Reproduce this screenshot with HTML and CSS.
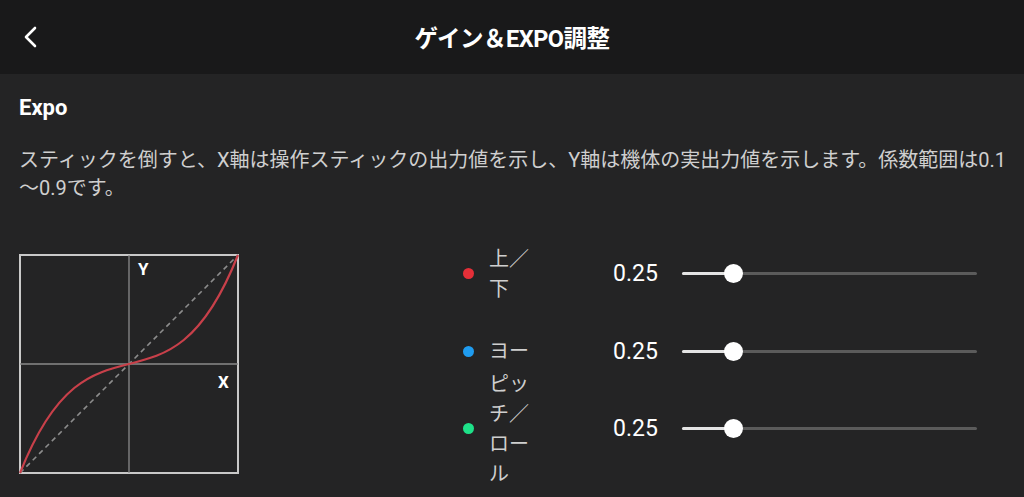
FILE: index.html
```html
<!DOCTYPE html>
<html lang="ja">
<head>
<meta charset="utf-8">
<title>ゲイン＆EXPO調整</title>
<link rel="stylesheet" href="styles.css">
</head>
<body>
<header class="topbar">
  <button class="back" aria-label="戻る">
    <svg width="16" height="22" viewBox="0 0 16 22"><polyline points="12,2 3,11 12,20" fill="none" stroke="#ffffff" stroke-width="2.6" stroke-linecap="round" stroke-linejoin="round"/></svg>
  </button>
  <h1 class="title">ゲイン＆EXPO調整</h1>
</header>
<main class="content">
  <h2 class="section-title">Expo</h2>
  <p class="desc">スティックを倒すと、X軸は操作スティックの出力値を示し、Y軸は機体の実出力値を示します。係数範囲は0.1<br>〜0.9です。</p>
  <section class="expo">
    <div class="graph">
      <svg width="220" height="220" viewBox="0 0 220 220">
        <rect x="1" y="1" width="218" height="218" fill="none" stroke="#c9c9c9" stroke-width="2"/>
        <line x1="110" y1="1" x2="110" y2="219" stroke="#8a8a8a" stroke-width="1.3"/>
        <line x1="1" y1="110" x2="219" y2="110" stroke="#8a8a8a" stroke-width="1.3"/>
        <line x1="1" y1="219" x2="219" y2="1" stroke="#8c8c8c" stroke-width="1.6" stroke-dasharray="5 4"/>
        <path d="M1 219 C37 128.3 73.5 119.2 110 110 C146.5 100.8 183 91.7 219 1" fill="none" stroke="#c8404a" stroke-width="2.2"/>
        <text x="119" y="21" class="axis-label">Y</text>
        <text x="199" y="134" class="axis-label">X</text>
      </svg>
    </div>
    <div class="controls">
      <div class="row">
        <span class="dot red"></span>
        <span class="label">上／下</span>
        <span class="value">0.25</span>
        <div class="slider"><div class="fill" style="width:17.5%"></div><div class="thumb" style="left:17.5%"></div></div>
      </div>
      <div class="row">
        <span class="dot blue"></span>
        <span class="label">ヨー</span>
        <span class="value">0.25</span>
        <div class="slider"><div class="fill" style="width:17.5%"></div><div class="thumb" style="left:17.5%"></div></div>
      </div>
      <div class="row">
        <span class="dot green"></span>
        <span class="label">ピッチ／ロール</span>
        <span class="value">0.25</span>
        <div class="slider"><div class="fill" style="width:17.5%"></div><div class="thumb" style="left:17.5%"></div></div>
      </div>
    </div>
  </section>
</main>
</body>
</html>
```
FILE: styles.css
```css
* { box-sizing: border-box; }
html, body {
  margin: 0;
  padding: 0;
  height: 497px;
  overflow: hidden;
  background: #242425;
  font-family: Roboto, "Noto Sans CJK JP", sans-serif;
  color: #ffffff;
}
.topbar {
  height: 74px;
  background: #19191a;
  display: flex;
  align-items: center;
  justify-content: center;
  position: relative;
}
.back {
  position: absolute;
  left: 23px;
  top: 26px;
  background: none;
  border: 0;
  padding: 0;
  width: 16px;
  height: 22px;
  display: block;
}
.back svg { display: block; }
.title {
  margin: 0;
  font-size: 23.5px;
  font-weight: 700;
  letter-spacing: -0.5px;
  color: #ffffff;
}
.content {
  padding: 22px 0 0 19px;
}
.section-title {
  margin: 0;
  font-size: 22px;
  line-height: 24px;
  font-weight: 700;
  color: #ffffff;
}
.desc {
  margin: 26px 0 0;
  font-size: 20px;
  line-height: 28px;
  color: #cfcfcf;
  white-space: nowrap;
}
.expo {
  margin-top: 33px;
  display: flex;
}
.graph {
  padding-top: 19px;
  width: 220px;
}
.graph svg { display: block; }
.axis-label {
  font-family: Roboto, sans-serif;
  font-weight: 700;
  font-size: 17px;
  fill: #ffffff;
}
.controls {
  margin-left: 224px;
  display: flex;
  flex-direction: column;
}
.row {
  height: 77.5px;
  display: flex;
  align-items: center;
}
.dot {
  width: 11px;
  height: 11px;
  border-radius: 50%;
  flex: none;
}
.red { background: #e52f38; }
.blue { background: #1f9cf0; }
.green { background: #1ee189; }
.label {
  width: 42px;
  margin-left: 15px;
  font-size: 20px;
  line-height: 30px;
  color: #cfcfcf;
  flex: none;
}
.value {
  margin-left: 82px;
  width: 45px;
  font-size: 23px;
  color: #ffffff;
  flex: none;
}
.slider {
  margin-left: 24px;
  width: 295px;
  height: 3px;
  background: #5b5b5b;
  border-radius: 2px;
  position: relative;
}
.fill {
  height: 3px;
  background: #e4e4e4;
  border-radius: 2px;
}
.thumb {
  position: absolute;
  top: 50%;
  width: 19px;
  height: 19px;
  margin: -9.5px 0 0 -9.5px;
  border-radius: 50%;
  background: #ffffff;
}
```
